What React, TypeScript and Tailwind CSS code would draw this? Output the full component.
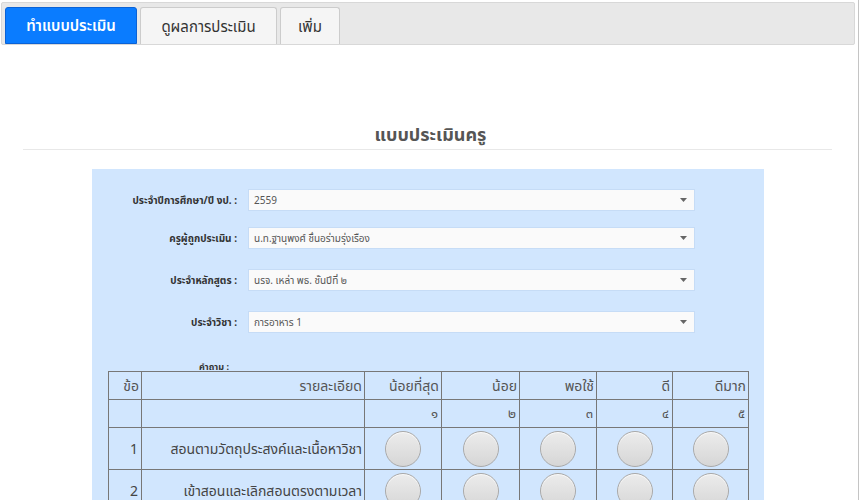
import React from 'react';

const thai = { fontFamily: 'Tahoma, "Noto Sans", "Noto Sans Thai", "DejaVu Sans", sans-serif' };

const fields = [
  { label: 'ประจำปีการศึกษา/ปี งป. :', value: '2559', mt: 'mt-[19px]' },
  { label: 'ครูผู้ถูกประเมิน :', value: 'น.ท.ฐานุพงศ์ ชื่นอร่ามรุ่งเรือง', mt: 'mt-[16px]' },
  { label: 'ประจำหลักสูตร :', value: 'นรจ. เหล่า พธ. ชั้นปีที่ ๒', mt: 'mt-[20px]' },
  { label: 'ประจำวิชา :', value: 'การอาหาร 1', mt: 'mt-[20px]' },
];

const levels = [
  { name: 'น้อยที่สุด', num: '๑', w: 'w-[77px]' },
  { name: 'น้อย', num: '๒', w: 'w-[78px]' },
  { name: 'พอใช้', num: '๓', w: 'w-[77px]' },
  { name: 'ดี', num: '๔', w: 'w-[76px]' },
  { name: 'ดีมาก', num: '๕', w: 'w-[76px]' },
];

const questions = ['สอนตามวัตถุประสงค์และเนื้อหาวิชา', 'เข้าสอนและเลิกสอนตรงตามเวลา'];

function Radio() {
  return (
    <div className="w-[36px] h-[36px] rounded-full border border-[#a9a9a9] bg-gradient-to-b from-[#ececec] to-[#d6d6d6] shadow-[inset_0_1px_1px_rgba(255,255,255,0.8)]" />
  );
}

export default function App() {
  return (
    <div className="w-[861px] h-[500px] overflow-hidden bg-white relative" style={thai}>
      {/* scrollbar edge */}
      <div className="absolute top-0 right-[2px] w-px h-full bg-[#c4c4c4]" />

      <div className="pt-[2px] pl-px pr-[6px]">
        <div className="h-[43px] bg-[#e8e8e8] border border-[#d8d8d8] rounded-[2px] flex items-end gap-[3px] pl-[3px]">
          <div className="h-[37px] w-[132px] bg-[#0a7cff] border border-[#0a62d6] rounded-t-[3px] flex items-center justify-center text-white text-[15px] font-semibold">
            ทำแบบประเมิน
          </div>
          <div className="h-[37px] w-[137px] bg-[#f5f5f5] border border-[#cccccc] border-b-0 rounded-t-[3px] flex items-center justify-center text-[#333] text-[15px]">
            ดูผลการประเมิน
          </div>
          <div className="h-[37px] w-[60px] bg-[#f5f5f5] border border-[#cccccc] border-b-0 rounded-t-[3px] flex items-center justify-center text-[#333] text-[15px]">
            เพิ่ม
          </div>
        </div>
      </div>

      <div className="mt-[78px] text-center text-[18px] font-bold text-[#555] leading-[22px]">แบบประเมินครู</div>
      <div className="mx-[23px] w-[809px] mt-[4px] border-t border-[#e8e8e8]" />

      <div className="ml-[92px] mt-[19px] w-[672px] h-[400px] bg-[#d1e6fe] pt-px">
        {fields.map((f) => (
          <div key={f.label} className={`flex items-center ${f.mt}`}>
            <div className="w-[145px] text-right text-[10px] font-bold text-[#333]">{f.label}</div>
            <div className="ml-[11px] w-[447px] h-[22px] bg-[#fafafa] border border-[#c6dcf6] flex items-center justify-between pl-[5px] pr-[7px] text-[10px] text-[#555]">
              <span>{f.value}</span>
              <svg width="7" height="4" viewBox="0 0 7 4"><path d="M0 0h7L3.5 4z" fill="#666" /></svg>
            </div>
          </div>
        ))}

        <div className="ml-[107px] mt-[28px] text-[9px] font-bold text-[#333] leading-[12px]">คำถาม :</div>

        <table className="ml-[16px] -mt-[2px] border-collapse border border-[#333] text-[14px] text-[#555]">
          <tbody>
            <tr className="h-[28px]">
              <td className="w-[33px] border border-[#777] text-right pr-[2px]">ข้อ</td>
              <td className="w-[223px] border border-[#777] text-right pr-[2px]">รายละเอียด</td>
              {levels.map((l) => (
                <td key={l.name} className={`${l.w} border border-[#777] text-right pr-[2px]`}>{l.name}</td>
              ))}
            </tr>
            <tr className="h-[28px]">
              <td className="border border-[#777]" />
              <td className="border border-[#777]" />
              {levels.map((l) => (
                <td key={l.num} className="border border-[#777] text-right pr-[3px] text-[13px]">{l.num}</td>
              ))}
            </tr>
            {questions.map((q, i) => (
              <tr key={q} className="h-[42px]">
                <td className="border border-[#777] text-right pr-[3px] text-[#444]">{i + 1}</td>
                <td className="border border-[#777] text-right pr-[2px] text-[#444]">{q}</td>
                {levels.map((l) => (
                  <td key={l.num} className="border border-[#777]">
                    <div className="flex justify-center"><Radio /></div>
                  </td>
                ))}
              </tr>
            ))}
          </tbody>
        </table>
      </div>
    </div>
  );
}
